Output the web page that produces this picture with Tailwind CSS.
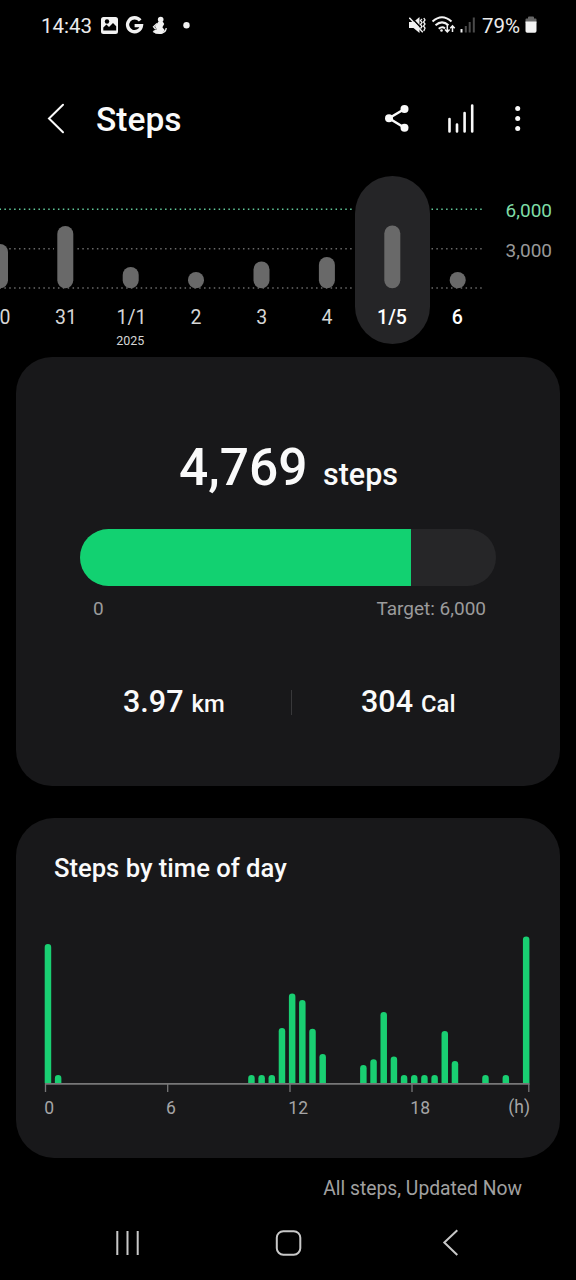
<!DOCTYPE html>
<html lang="en">
<head>
<meta charset="utf-8">
<title>Steps</title>
<script src="https://cdn.jsdelivr.net/npm/@tailwindcss/browser@4"></script>
</head>
<body class="bg-black">
<div class="flex h-[1280px] w-[576px] flex-col overflow-hidden bg-black font-['Roboto',sans-serif] text-[#fafafa]">
  <!-- Status bar -->
  <div class="flex h-[50px] shrink-0 items-center justify-between pl-[41px] pr-[39px]">
    <div class="flex items-center">
      <span class="w-[60px] whitespace-nowrap pt-px text-[20.5px] leading-[50px] text-[#ececec]">14:43</span>
      <svg class="h-[20px] w-[92px]" viewBox="101 15 92 20" fill="#f2f2f2">
        <path fill-rule="evenodd" d="M103.5 17h12a2.5 2.5 0 0 1 2.500 2.500v12a2.500 2.500 0 0 1-2.500 2.500h-12a2.500 2.500 0 0 1-2.500-2.500v-12a2.500 2.500 0 0 1 2.500-2.500ZM103.300 30.500h12.900v-4.200l-3.200-3.300-4 4-2.500-2.600-3.200 3.100Z"/>
        <circle cx="107" cy="21.500" r="2.200" fill="#000"/>
        <path d="M140.200 20.600A7 7 0 1 0 141.500 25.600H134.600" fill="none" stroke="#f2f2f2" stroke-width="3.300"/>
        <circle cx="160.700" cy="19.500" r="2.800"/>
        <path d="M158.500 21.500h4.200l1.500 2.500-1.800 3.300 2.400 3-2.800 3.200h-6.500l-2.200-2.700 3.500-1.500-1.800-2.600Z"/>
        <path d="M157 23.500l-3.500 3.200 2.200 2.500M153 31.500q4 2.400 9 1.500 4-1 4.200-5" fill="none" stroke="#f2f2f2" stroke-width="1.300"/>
        <circle cx="186.500" cy="25.300" r="3.200"/>
      </svg>
    </div>
    <div class="flex items-center">
      <svg class="mr-[6px] h-[22px] w-[68px]" viewBox="409 14 68 22" fill="none" stroke="#f2f2f2">
        <path d="M409 22h4.500l6-5v16l-6-5h-4.500Z" fill="#f2f2f2" stroke="none"/>
        <path d="M410.500 16.500l13 14" stroke="#000" stroke-width="1.500"/>
        <path d="M409.300 17.800l13.500 14.500" stroke-width="1.500"/>
        <path d="M422 19l-1.500 1.500 1.500 2-1.500 2 1.500 2-1.500 2M423.800 18l1.200 2-1.500 2 1.500 2-1.500 2 1.500 2-1.200 3" stroke-width="1.300"/>
        <path d="M432.500 21.500q9.500-8.500 19 0M435.500 25.200q6.500-5.700 13 0M438.700 28.800q3.500-2.800 6.300-.4" stroke-width="2"/>
        <circle cx="441.500" cy="30.500" r="1.300" fill="#f2f2f2" stroke="none"/>
        <path d="M447.300 25v6.500M445 29.500l2.300 2.500 2.300-2.500M452.500 32v-6M450.300 28.300l2.200-2.500 2.200 2.500" stroke-width="1.500"/>
        <path d="M461.500 29v3.500" stroke-width="2"/>
        <path d="M465.800 26v6.500M469.700 22v10.500M473.800 17.500v15" stroke="#4b4b4b" stroke-width="2"/>
      </svg>
      <span class="w-[42px] whitespace-nowrap pt-px text-[20.5px] leading-[50px] -ml-px mr-px text-[#ececec]">79%</span>
      <svg class="h-[18px] w-[12px]" viewBox="0 0 12 18">
        <path d="M3 1.500Q3 .5 4 .5h4q1 0 1 1v1h1.500q1 0 1 1V7H.5V3.500q0-1 1-1H3Z" fill="#666"/>
        <path d="M.5 5.500h11V15q0 1.700-1.700 1.700H2.200Q.5 16.700.5 15Z" fill="#f2f2f2"/>
      </svg>
    </div>
  </div>

  <!-- App bar -->
  <header class="flex h-[120px] shrink-0 items-start justify-between pl-[47px] pr-[52px] pt-[45px]">
    <div class="flex items-start">
      <svg class="h-[48px] w-[18px]" viewBox="47 95 18 48" fill="none" stroke="#fafafa" stroke-width="2" stroke-linecap="round"><path d="M63 104.700L49 118.500L63 132.200"/></svg>
      <h1 class="ml-[31px] mt-px whitespace-nowrap text-[33.500px] font-medium leading-[48px]">Steps</h1>
    </div>
    <svg class="h-[48px] w-[140px]" viewBox="384 95 140 48" fill="#fafafa" stroke="#fafafa">
      <path d="M404.500 109L389 118.300L404.500 127.700" fill="none" stroke-width="2.500"/>
      <g stroke="none"><circle cx="404.500" cy="109" r="4"/><circle cx="389" cy="118.300" r="4"/><circle cx="404.500" cy="127.700" r="4"/>
      <circle cx="517.700" cy="108.500" r="2.500"/><circle cx="517.700" cy="118.500" r="2.500"/><circle cx="517.700" cy="128.500" r="2.500"/></g>
      <path d="M449.500 119v12.500M457 124.500v7M464.600 113v18.500M472.200 105.500v26" stroke-width="2.600" stroke-linecap="round"/>
    </svg>
  </header>

  <!-- Daily history chart -->
  <svg class="h-[187px] w-[576px] shrink-0" viewBox="0 170 576 187">
    <g fill="none" stroke-width="1.500" stroke-dasharray="1.500 3.370">
      <path d="M-.5 209.300H353M431.500 209.300H482" stroke="#62c99a"/>
      <path d="M-.5 248.700H353M431.500 248.700H482M-.5 288H353M431.500 288H482" stroke="#696969"/>
    </g>
    <rect x="355" y="176" width="75" height="168" rx="37.500" fill="#252527"/>
    <g fill="#000"><rect x="54" y="240" width="22" height="16"/><rect x="0" y="246" width="9" height="5"/></g>
    <g fill="#696969">
      <rect x="-8" y="244" width="16" height="44.300" rx="8"/>
      <rect x="57.300" y="226" width="16" height="62.300" rx="8"/>
      <rect x="122.700" y="267" width="16" height="21.300" rx="8"/>
      <rect x="188" y="272" width="16" height="16.300" rx="8"/>
      <rect x="253.500" y="261.500" width="16" height="26.800" rx="8"/>
      <rect x="318.900" y="257" width="16" height="31.300" rx="8"/>
      <rect x="384.300" y="225.500" width="16" height="62.800" rx="8"/>
      <rect x="449.700" y="272" width="16" height="16.300" rx="8"/>
    </g>
    <g font-size="19.500" fill="#d6d6d6" text-anchor="middle">
      <text x="-.5" y="323.500">30</text>
      <text x="66" y="323.500">31</text>
      <text x="131.500" y="323.500">1/1</text>
      <text x="196" y="323.500">2</text>
      <text x="261.700" y="323.500">3</text>
      <text x="327" y="323.500">4</text>
      <text x="130.300" y="345" font-size="12.500">2025</text>
      <g font-weight="500" fill="#fff"><text x="392" y="323.500">1/5</text><text x="457.300" y="323.500">6</text></g>
    </g>
    <g font-size="19" text-anchor="end"><text x="552" y="217" fill="#7fdca6">6,000</text><text x="552" y="256.700" fill="#999">3,000</text></g>
  </svg>

  <!-- Today's total -->
  <section class="mx-4 flex h-[429px] shrink-0 flex-col rounded-[36px] bg-[#18181a] px-16 pt-[81px]">
    <div class="flex h-[60px] items-baseline pl-[99px] font-medium leading-[60px]">
      <span class="w-[144px] text-[51.500px]">4,769</span><span class="text-[30.500px]">steps</span>
    </div>
    <div class="mt-[30.500px] h-[57.500px] w-[416px] shrink-0 overflow-hidden rounded-full bg-[#262628]">
      <div class="h-full bg-[#12d171]" style="width:79.500%"></div>
    </div>
    <div class="mt-px flex h-[44px] justify-between pl-[13px] pr-[10px] text-[19px] leading-[44px] text-[#9b9b9c]"><span>0</span><span>Target: 6,000</span></div>
    <div class="mt-[43px] flex h-[56px] items-center font-medium leading-[56px]">
      <div class="flex w-[211px] items-baseline gap-[8px] pl-[43px] pt-[2px]"><span class="text-[30.500px]">3.97</span><span class="text-[23.800px]">km</span></div>
      <div class="h-[25px] w-px bg-[#38383a]"></div>
      <div class="flex items-baseline gap-[8px] pl-[69px] pt-[2px]"><span class="text-[30.500px]">304</span><span class="text-[23.800px]">Cal</span></div>
    </div>
  </section>

  <!-- Hourly breakdown -->
  <section class="mx-4 mt-8 flex h-[340px] shrink-0 flex-col rounded-[38px] bg-[#18181a]">
    <h2 class="mt-[30px] h-[40px] whitespace-nowrap pl-[38px] text-[25.600px] font-medium leading-[40px]">Steps by time of day</h2>
    <svg id="hourly" class="mt-[32px] h-[210px] w-[544px]" viewBox="16 920 544 210">
      <g id="bars" fill="#19cf72"></g>
      <path d="M45 1083.900H529.500" stroke="#777778" stroke-width="1.600"/>
      <path d="M45.500 1084v8M167.700 1084v8M290 1084v8M412 1084v8M528.800 1084v8" stroke="#777778" stroke-width="1.300"/>
      <g font-size="17.500" fill="#a5a5a6">
        <text x="44.300" y="1114">0</text><text x="166" y="1114">6</text><text x="288.300" y="1114">12</text><text x="410.300" y="1114">18</text><text x="530" y="1113" text-anchor="end">(h)</text>
      </g>
    </svg>
  </section>

  <div class="flex h-[60px] shrink-0 justify-end pr-[54px] pt-px text-[19.300px] leading-[60px] text-[#a0a0a0]"><span>All steps, Updated Now</span></div>

  <!-- System navigation -->
  <nav class="flex h-[50px] shrink-0 items-center pl-[115px]">
    <svg class="h-[30px] w-[25px]" viewBox="115 1228 25 30" stroke="#c8c8c8" stroke-width="2"><path d="M117.300 1231v24M127.500 1231v24M137.700 1231v24"/></svg>
    <svg class="ml-[134px] h-[30px] w-[28px]" viewBox="274 1228 28 30" fill="none" stroke="#c8c8c8" stroke-width="2"><rect x="276.800" y="1231.200" width="23.500" height="23.500" rx="6.500"/></svg>
    <svg class="ml-[139px] h-[30px] w-[18px]" viewBox="441 1228 18 30" fill="none" stroke="#c8c8c8" stroke-width="2"><path d="M457.300 1230.300L444.300 1242.500L457.300 1255"/></svg>
  </nav>
</div>
<script>
  // Half-hour slot index -> bar height in pixels
  const slots = {0:139.500,1:8.500,20:8.500,21:8.500,22:8.500,23:55.500,24:90,25:83.500,26:54.800,27:29.500,31:18.500,32:24.200,33:71.500,34:27,35:8.500,36:8.500,37:8.500,38:8.500,39:52.500,40:22.500,43:8.500,45:8.500,47:147};
  const g = document.getElementById('bars');
  for (const [i, h] of Object.entries(slots)) {
    const p = document.createElementNS('http://www.w3.org/2000/svg', 'path');
    p.setAttribute('d', `M${44.7 + 10.175 * i} 1083.500v${3.25 - h}a3.250 3.250 0 0 1 6.500 0v${h - 3.25}z`);
    g.appendChild(p);
  }
</script>
</body>
</html>
